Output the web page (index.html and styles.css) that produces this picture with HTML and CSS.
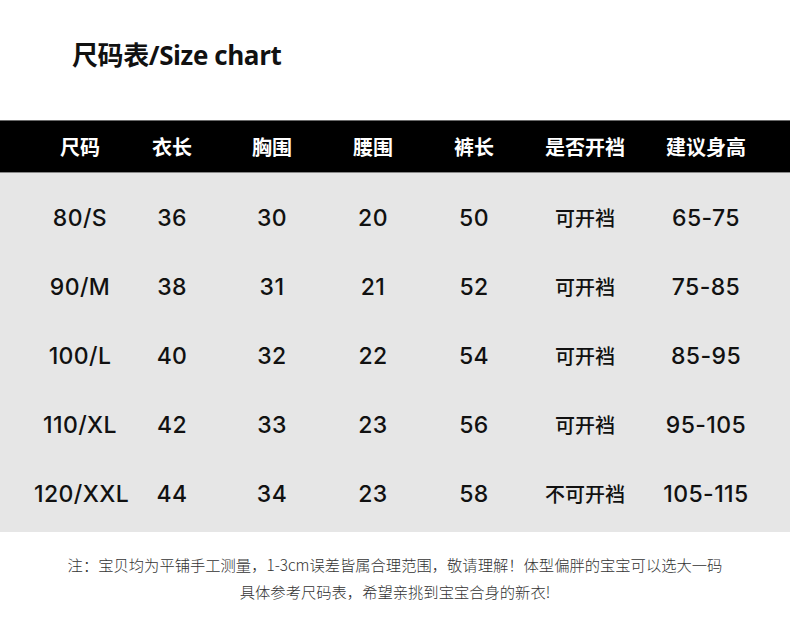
FILE: index.html
```html
<!DOCTYPE html>
<html lang="zh">
<head>
<meta charset="utf-8">
<link rel="stylesheet" href="styles.css">
</head>
<body>
<div class="page">
  <h1 class="title">尺码表/Size chart</h1>
  <div class="table">
    <div class="row head">
      <div>尺码</div><div>衣长</div><div>胸围</div><div>腰围</div><div>裤长</div><div>是否开裆</div><div>建议身高</div>
    </div>
    <div class="body">
      <div class="row"><div>80/S</div><div>36</div><div>30</div><div>20</div><div>50</div><div class="cn">可开裆</div><div>65-75</div></div>
      <div class="row"><div>90/M</div><div>38</div><div>31</div><div>21</div><div>52</div><div class="cn">可开裆</div><div>75-85</div></div>
      <div class="row"><div>100/L</div><div>40</div><div>32</div><div>22</div><div>54</div><div class="cn">可开裆</div><div>85-95</div></div>
      <div class="row"><div>110/XL</div><div>42</div><div>33</div><div>23</div><div>56</div><div class="cn">可开裆</div><div>95-105</div></div>
      <div class="row"><div>120/XXL</div><div>44</div><div>34</div><div>23</div><div>58</div><div class="cn">不可开裆</div><div>105-115</div></div>
    </div>
  </div>
  <div class="note">
    <p>注：宝贝均为平铺手工测量，1-3cm误差皆属合理范围，敬请理解！体型偏胖的宝宝可以选大一码</p>
    <p>具体参考尺码表，希望亲挑到宝宝合身的新衣!</p>
  </div>
</div>
</body>
</html>
```
FILE: styles.css
```css
html, body {
  margin: 0;
  padding: 0;
  background: #ffffff;
}
.page {
  width: 790px;
  height: 634px;
  overflow: hidden;
  font-family: Inter, "Liberation Sans", "Noto Sans CJK SC", sans-serif;
  color: #111;
}
.title {
  margin: 0;
  padding: 38px 0 0 72px;
  height: 82px;
  box-sizing: border-box;
  font-family: "Open Sans", "Noto Sans CJK SC", sans-serif;
  font-weight: 700;
  font-size: 26px;
  line-height: 34px;
  color: #111;
  letter-spacing: -0.4px;
}
.table {
  margin-top: 38px;
}
.row {
  display: grid;
  grid-template-columns: 92px 92px 108px 94px 108px 114px 128px;
  padding-left: 34px;
  align-items: center;
  text-align: center;
}
.head {
  background: #000;
  color: #fff;
  height: 51px;
  border-top: 1px solid #6a6a6a;
  border-bottom: 1px solid #888;
  font-family: "Noto Sans CJK SC", sans-serif;
  font-weight: 700;
  font-size: 20px;
}
.body {
  background: #e6e6e6;
  padding: 10px 0 4px;
}
.body .row {
  height: 69px;
  font-size: 23px;
  font-weight: 500;
  letter-spacing: 0.4px;
}
.body .cn {
  font-family: "Noto Sans CJK SC", sans-serif;
  font-size: 20px;
  font-weight: 500;
  letter-spacing: 0;
}
.note {
  padding-top: 19px;
  text-align: center;
  font-family: "Noto Sans CJK SC", sans-serif;
  font-weight: 300;
  font-size: 15.3px;
  color: #333;
}
.note p {
  margin: 0;
  line-height: 27px;
}
```
